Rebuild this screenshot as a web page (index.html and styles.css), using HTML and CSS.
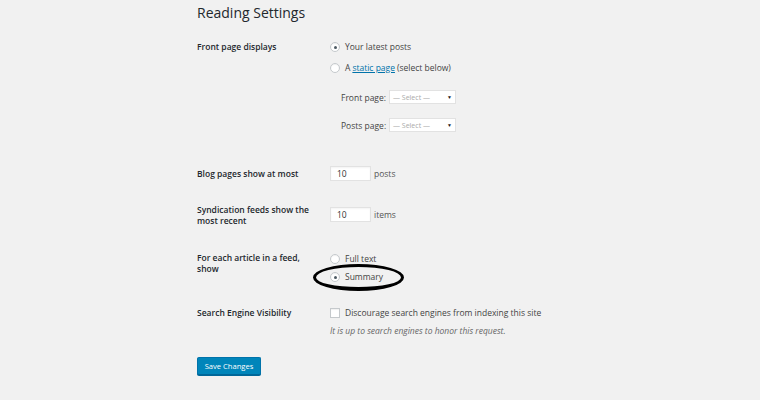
FILE: index.html
```html
<!DOCTYPE html>
<html>
<head>
<meta charset="utf-8">
<link rel="stylesheet" href="styles.css">
</head>
<body>
<div class="wrap">
  <h1 class="title">Reading Settings</h1>

  <div class="row r1">
    <div class="label">Front page displays</div>
    <div class="field">
      <div class="opt"><span class="radio checked"></span>Your latest posts</div>
      <div class="opt opt2"><span class="radio"></span>A <a class="link">static page</a> (select below)</div>
      <div class="sub">
        <div class="subrow"><span class="sublabel">Front page:</span><span class="select">— Select —<span class="arrow">▼</span></span></div>
        <div class="subrow"><span class="sublabel">Posts page:</span><span class="select">— Select —<span class="arrow">▼</span></span></div>
      </div>
    </div>
  </div>

  <div class="row r2">
    <div class="label lh15">Blog pages show at most</div>
    <div class="field inline"><span class="num">10</span><span class="unit">posts</span></div>
  </div>

  <div class="row r3">
    <div class="label">Syndication feeds show the<br>most recent</div>
    <div class="field inline mt3"><span class="num">10</span><span class="unit">items</span></div>
  </div>

  <div class="row r4">
    <div class="label">For each article in a feed,<br>show</div>
    <div class="field">
      <div class="opt mt1"><span class="radio"></span>Full text</div>
      <div class="opt opt-sum"><span class="radio checked"></span>Summary<span class="circle"></span></div>
    </div>
  </div>

  <div class="row r5">
    <div class="label">Search Engine Visibility</div>
    <div class="field">
      <div class="opt"><span class="check"></span>Discourage search engines from indexing this site</div>
      <div class="desc">It is up to search engines to honor this request.</div>
    </div>
  </div>

  <div class="actions"><span class="button">Save Changes</span></div>
</div>
</body>
</html>
```

FILE: styles.css
```css
html, body {
  margin: 0;
  padding: 0;
  background: #f1f1f1;
}
body {
  font-family: "Open Sans", "Noto Sans", sans-serif;
  font-size: 8.5px;
  color: #444;
  width: 760px;
  height: 400px;
  overflow: hidden;
}
.wrap {
  padding-left: 197px;
}
.title {
  margin: 0;
  padding-top: 4px;
  font-size: 14px;
  line-height: 18px;
  font-weight: 400;
  color: #23282d;
}
.row {
  display: grid;
  grid-template-columns: 133px 1fr;
  align-items: start;
}
.r1 { margin-top: 19px; }
.r2 { margin-top: 34px; }
.r3 { margin-top: 23px; }
.r4 { margin-top: 26px; }
.r5 { margin-top: 24px; }
.label {
  font-weight: 600;
  color: #23282d;
  line-height: 11px;
}
.lh15 { line-height: 15px; }
.opt {
  display: flex;
  align-items: center;
  line-height: 12px;
  height: 12px;
  position: relative;
}
.opt2 { margin-top: 9px; }
.mt1 { margin-top: 1px; }
.mt3 { margin-top: 3px; }
.opt-sum { margin-top: 6px; }
.radio {
  box-sizing: border-box;
  width: 10px;
  height: 10px;
  border-radius: 50%;
  border: 1px solid #c5c9cc;
  background: #fff;
  margin-right: 5px;
  display: flex;
  align-items: center;
  justify-content: center;
  box-shadow: inset 0 1px 1px rgba(0,0,0,0.06);
}
.radio.checked::after {
  content: "";
  width: 3px;
  height: 3px;
  border-radius: 50%;
  background: #4d5a63;
}
.check {
  box-sizing: border-box;
  width: 10px;
  height: 10px;
  border: 1px solid #c5c9cc;
  background: #fff;
  margin-right: 5px;
  box-shadow: inset 0 1px 1px rgba(0,0,0,0.06);
}
.link {
  color: #0073aa;
  text-decoration: underline;
  margin: 0 2px;
}
.sub {
  margin-top: 16px;
  padding-left: 11px;
  display: flex;
  flex-direction: column;
  gap: 14px;
}
.subrow {
  display: flex;
  align-items: center;
  height: 14px;
}
.sublabel {
  width: 48px;
  color: #444;
}
.select {
  box-sizing: border-box;
  width: 67px;
  height: 14px;
  background: #fff;
  border: 1px solid #e2e2e2;
  color: #aaa;
  font-size: 7px;
  display: flex;
  align-items: center;
  padding-left: 3px;
  position: relative;
}
.arrow {
  position: absolute;
  right: 3px;
  top: 3px;
  font-size: 5px;
  color: #222;
}
.inline {
  display: flex;
  align-items: center;
}
.num {
  box-sizing: border-box;
  width: 41px;
  height: 15px;
  background: #fff;
  border: 1px solid #e2e2e2;
  box-shadow: inset 0 1px 2px rgba(0,0,0,0.05);
  padding-left: 6px;
  line-height: 13px;
  color: #333;
  margin-right: 3px;
}
.unit {
  color: #555;
}
.circle {
  position: absolute;
  left: -17px;
  top: -7px;
  width: 91px;
  height: 27px;
  box-sizing: border-box;
  border: 3.5px solid #000;
  border-bottom-width: 4.5px;
  border-radius: 50%;
}
.desc {
  margin-top: 6px;
  line-height: 11px;
  font-style: italic;
  color: #666;
}
.actions {
  margin-top: 21px;
}
.button {
  display: inline-flex;
  align-items: center;
  justify-content: center;
  box-sizing: border-box;
  width: 64px;
  height: 18px;
  background: #0085ba;
  border: 1px solid #0073aa;
  border-bottom-color: #006799;
  border-radius: 2px;
  color: #fff;
  font-size: 7.6px;
  box-shadow: 0 1px 0 #006799;
}
```
